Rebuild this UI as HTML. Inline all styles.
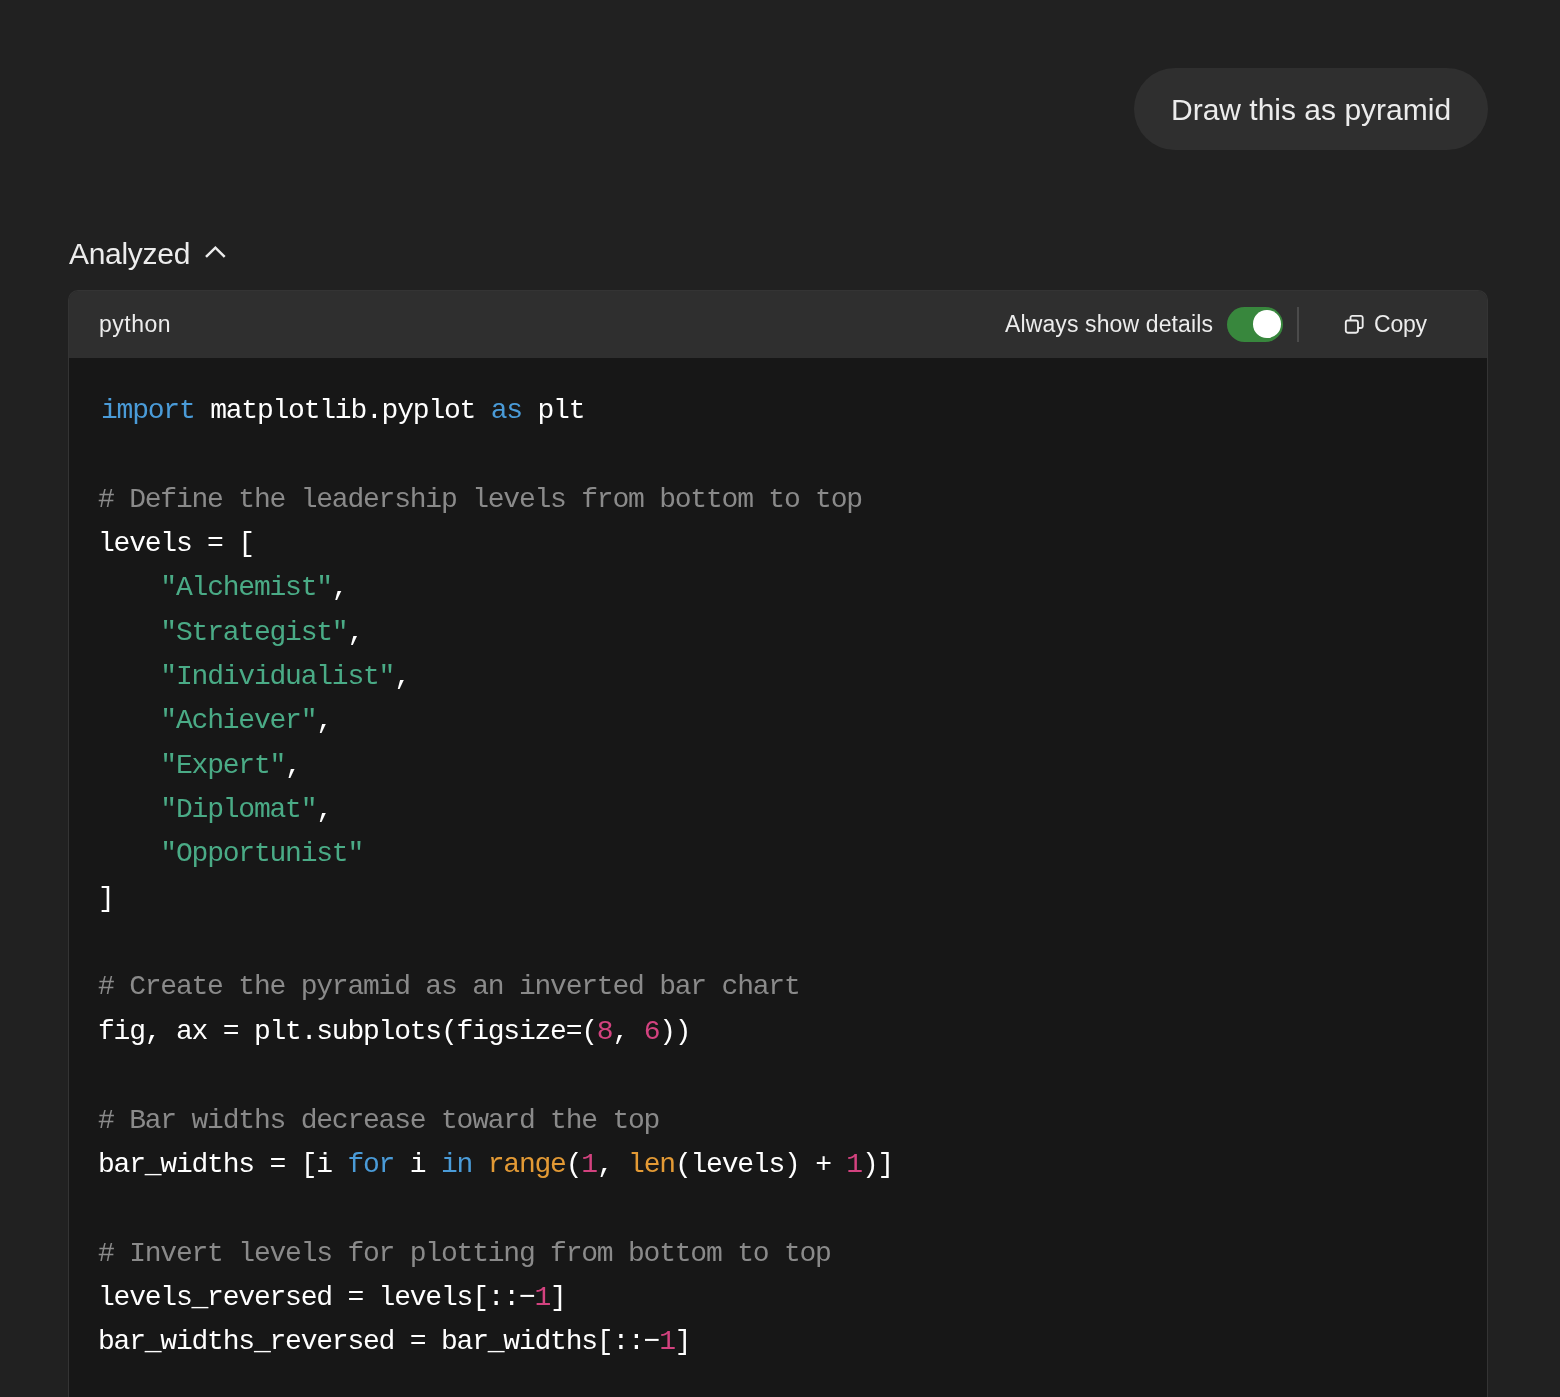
<!DOCTYPE html>
<html>
<head>
<meta charset="utf-8">
<title>Chat</title>
<style>
  html, body { margin: 0; padding: 0; }
  body {
    width: 1560px; height: 1397px; overflow: hidden;
    background: #212121;
    font-family: "Liberation Sans", sans-serif;
    color: #ececec;
    position: relative;
  }
  .abs { position: absolute; white-space: nowrap; margin: 0; padding: 0; will-change: transform; }
  .bubble {
    position: absolute; left: 1134px; top: 68px; width: 354px; height: 82px;
    border-radius: 41px; background: #2f2f2f;
  }
  .btxt { left: 1170.6px; top: 92.6px; font-size: 30px; line-height: 34px; color: #ececec; }
  .analyzed { left: 69.2px; top: 236.9px; font-size: 30px; line-height: 34px; color: #ececec; letter-spacing: -0.3px; }
  .chev { position: absolute; left: 200px; top: 240px; }
  .codebox {
    position: absolute; left: 68px; top: 290px; width: 1420px; height: 1107px;
    box-sizing: border-box;
    border: 1px solid #343434; border-bottom: 0; border-radius: 10px 10px 0 0;
    background: linear-gradient(to bottom, #2f2f2f 0, #2f2f2f 66.9px, #171717 66.9px, #171717 100%); background-clip: padding-box; overflow: hidden;
  }
  .ht { font-size: 23px; line-height: 26px; top: 310.8px; color: #ececec; }
  .toggle {
    position: absolute; left: 1227px; top: 306.6px; width: 56px; height: 35.2px;
    border-radius: 18px; background: #38873d;
  }
  .toggle i {
    position: absolute; left: 26.2px; top: 3.9px; width: 27.8px; height: 27.6px;
    border-radius: 50%; background: #ffffff;
  }
  .divider {
    position: absolute; left: 1297.4px; top: 307px; width: 2px; height: 35px;
    background: #4b4b4b;
  }
  .copyicon { position: absolute; left: 1343.1px; top: 313.1px; }
  pre {
    position: absolute; left: 98.39px; top: 388.78px; margin: 0; text-indent: 3px;
    font-family: "Liberation Mono", monospace;
    font-size: 28px; line-height: 44.338px; letter-spacing: -1.214px;
    color: #ffffff; white-space: pre; will-change: transform;
  }
  .k { color: #4a9bd8; }
  .s { color: #4aab86; }
  .c { color: #8a8a8a; }
  .n { color: #d3427f; }
  .b { color: #e39a35; }
</style>
</head>
<body>
  <div class="bubble"></div>
  <div class="abs btxt">Draw this as pyramid</div>

  <div class="abs analyzed">Analyzed</div>
  <svg class="chev" width="32" height="24" viewBox="0 0 32 24">
    <path d="M6.0 16.9 L15.4 7.7 L24.7 16.9" fill="none" stroke="#ececec" stroke-width="2.5" stroke-linecap="butt" stroke-linejoin="miter"/>
  </svg>

  <div class="codebox">
  </div>

  <div class="abs ht" id="t_py" style="left:98.8px; letter-spacing:0.5px">python</div>
  <div class="abs ht" id="t_al" style="left:1005px; letter-spacing:0.12px">Always show details</div>
  <div class="toggle"><i></i></div>
  <div class="divider"></div>
  <svg class="copyicon" width="22.5" height="22.5" viewBox="0 0 24 24">
    <path fill="#ececec" fill-rule="evenodd" clip-rule="evenodd" d="M7 5C7 3.34315 8.34315 2 10 2H19C20.6569 2 22 3.34315 22 5V14C22 15.6569 20.6569 17 19 17H17V19C17 20.6569 15.6569 22 14 22H5C3.34315 22 2 20.6569 2 19V10C2 8.34315 3.34315 7 5 7H7V5ZM9 7H14C15.6569 7 17 8.34315 17 10V15H19C19.5523 15 20 14.5523 20 14V5C20 4.44772 19.5523 4 19 4H10C9.44772 4 9 4.44772 9 5V7ZM5 9C4.44772 9 4 9.44772 4 10V19C4 19.5523 4.44772 20 5 20H14C14.5523 20 15 19.5523 15 19V10C15 9.44772 14.5523 9 14 9H5Z"/>
  </svg>
  <div class="abs ht" id="t_cp" style="left:1373.7px; letter-spacing:-0.2px">Copy</div>

<pre><span class="k">import</span> matplotlib.pyplot <span class="k">as</span> plt

<span class="c"># Define the leadership levels from bottom to top</span>
levels = [
    <span class="s">"Alchemist"</span>,
    <span class="s">"Strategist"</span>,
    <span class="s">"Individualist"</span>,
    <span class="s">"Achiever"</span>,
    <span class="s">"Expert"</span>,
    <span class="s">"Diplomat"</span>,
    <span class="s">"Opportunist"</span>
]

<span class="c"># Create the pyramid as an inverted bar chart</span>
fig, ax = plt.subplots(figsize=(<span class="n">8</span>, <span class="n">6</span>))

<span class="c"># Bar widths decrease toward the top</span>
bar_widths = [i <span class="k">for</span> i <span class="k">in</span> <span class="b">range</span>(<span class="n">1</span>, <span class="b">len</span>(levels) + <span class="n">1</span>)]

<span class="c"># Invert levels for plotting from bottom to top</span>
levels_reversed = levels[::&#8722;<span class="n">1</span>]
bar_widths_reversed = bar_widths[::&#8722;<span class="n">1</span>]
</pre>
</body>
</html>
